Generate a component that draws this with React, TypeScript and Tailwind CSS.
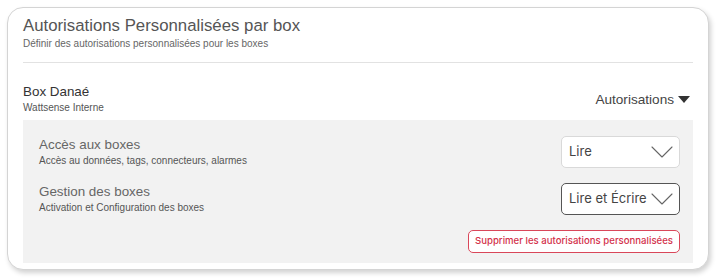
import React from "react";

function Chevron() {
  return (
    <svg width="22" height="12" viewBox="0 0 22 12" fill="none" className="shrink-0">
      <polyline points="1,1 11,11 21,1" stroke="#666" strokeWidth="1.1" strokeLinecap="round" strokeLinejoin="round" />
    </svg>
  );
}

function PermRow({
  title,
  desc,
  value,
  active,
}: {
  title: string;
  desc: string;
  value: string;
  active?: boolean;
}) {
  return (
    <div className="flex items-center justify-between">
      <div className="flex flex-col">
        <span className="text-[13.4px] leading-[18px] text-[#666]">{title}</span>
        <span className="text-[10px] leading-[14px] text-[#555]">{desc}</span>
      </div>
      <div
        className={
          "flex items-center justify-between w-[119px] h-[32px] pl-[7px] pr-[6px] rounded-[5px] bg-white font-['Inter'] text-[13px] text-[#444] " +
          (active ? "border border-[#555]" : "border border-[#d9d9d9]")
        }
      >
        <span>{value}</span>
        <Chevron />
      </div>
    </div>
  );
}

export default function App() {
  return (
    <div className="w-[716px] h-[280px] bg-white pl-[7px] pt-[7px] font-['Liberation_Sans',sans-serif]">
      <div className="w-[702px] h-[263px] rounded-[16px] border border-[#d4d4d4] shadow-[2px_3px_5px_rgba(0,0,0,0.18)] bg-white px-[15px] pt-[7px] overflow-hidden">
        <h1 className="text-[16.8px] leading-[22px] text-[#555]">Autorisations Personnalisées par box</h1>
        <p className="text-[10px] leading-[14px] text-[#666]">
          Définir des autorisations personnalisées pour les boxes
        </p>
        <div className="h-px bg-[#e2e2e2] mt-[11px]" />
        <div className="flex items-end justify-between mt-[20px]">
          <div className="flex flex-col">
            <span className="text-[13.4px] leading-[18px] text-[#333]">Box Danaé</span>
            <span className="text-[10px] leading-[14px] text-[#555]">Wattsense Interne</span>
          </div>
          <div className="flex items-center gap-[4px] text-[13.6px] leading-[18px] text-[#444] mr-[3px] mb-[6px]">
            <span>Autorisations</span>
            <svg width="12" height="8" viewBox="0 0 12 8">
              <polygon points="0,0 12,0 6,7" fill="#333" />
            </svg>
          </div>
        </div>
        <div className="bg-[#f2f2f2] mt-[5px] pl-[16px] pr-[13px] pt-[16px] pb-[10px] flex flex-col">
          <PermRow title="Accès aux boxes" desc="Accès au données, tags, connecteurs, alarmes" value="Lire" />
          <div className="h-[15px]" />
          <PermRow title="Gestion des boxes" desc="Activation et Configuration des boxes" value="Lire et Écrire" active />
          <div className="flex justify-end mt-[15px]">
            <button className="h-[23px] px-[6px] rounded-[5px] border border-[#d9475a] bg-white font-['Inter'] text-[9.6px] font-medium text-[#d3314a]">
              Supprimer les autorisations personnalisées
            </button>
          </div>
        </div>
      </div>
    </div>
  );
}
